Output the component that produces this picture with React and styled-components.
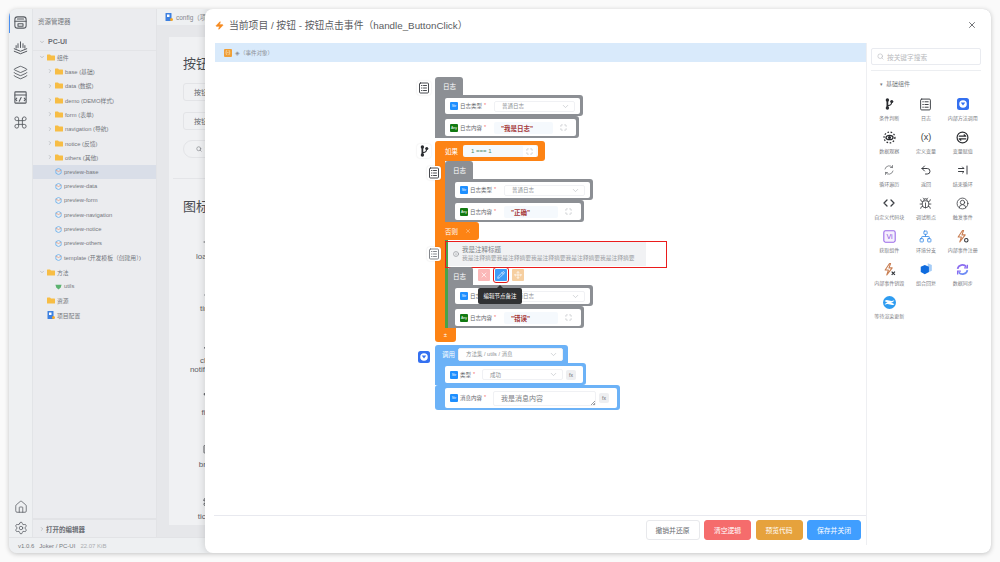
import React from "react";
import styled, { createGlobalStyle } from "styled-components";
import {
  Bell, BookOpen, Bug, ChevronDown, ChevronRight, CircleUserRound, Code, Command, Filter, Home,
  Info, Layers, Maximize, Network, Pencil, Search, Settings, Ticket, Timer, Undo2, X, Zap, Loader, Move,
} from "lucide-react";

const GlobalStyle = createGlobalStyle`
  html, body {
    margin: 0;
    height: 562px;
    overflow: hidden;
    background: #fafafa;
    font-family: "Liberation Sans", "Noto Sans CJK SC", sans-serif;
  }
  * { box-sizing: border-box; }
`;

const Page = styled.div`
  padding: 9px;
  width: 1000px;
  height: 562px;
`;

const Frame = styled.div`
  position: relative;
  width: 982px;
  height: 544px;
  display: flex;
  flex-direction: column;
  border-radius: 8px;
  overflow: hidden;
  background: #e8e9ec;
  box-shadow: 0 1px 5px rgba(0, 0, 0, 0.22);
`;

const Workspace = styled.div`
  flex: 1;
  min-height: 0;
  display: flex;
`;

const ActivityBar = styled.div`
  width: 24px;
  display: flex;
  flex-direction: column;
  align-items: center;
  padding: 1px 0 1px;
  background: #eef0f2;
  color: #55595f;
  border-right: 1px solid #e2e4e7;
`;

const ActivityItem = styled.div`
  position: relative;
  width: 100%;
  height: ${(p) => p.$h || 25}px;
  flex: none;
  display: flex;
  align-items: center;
  justify-content: center;
  ${(p) => p.$active && `
    &::before {
      content: "";
      position: absolute;
      left: 0;
      top: 3px;
      width: 1px;
      height: 20px;
      background: #4a8ff0;
    }
  `}
`;

const Spacer = styled.div`
  flex: 1;
`;

const Sidebar = styled.div`
  width: 124px;
  display: flex;
  flex-direction: column;
  background: #ebecef;
  border-right: 1px solid #e2e3e6;
`;

const SideTitle = styled.div`
  height: 24px;
  padding-left: 5px;
  display: flex;
  align-items: center;
  font-size: 6.5px;
  color: #777a80;
`;

const ProjectRow = styled.div`
  height: 18px;
  margin-bottom: -1px;
  padding-left: 6px;
  display: flex;
  align-items: center;
  gap: 3px;
  font-size: 7px;
  font-weight: bold;
  color: #6c6f75;
  border-bottom: 1px solid #e3e4e7;
`;

const TreeRow = styled.div`
  height: 14.33px;
  padding-left: ${(p) => 6 + p.$level * 8}px;
  display: flex;
  align-items: center;
  gap: 2px;
  font-size: 5.8px;
  white-space: nowrap;
  color: #74777d;
  background: ${(p) => (p.$selected ? "#d9dee8" : "transparent")};
`;

const Twist = styled.span`
  width: 6px;
  flex: none;
  display: flex;
  color: #999ca1;
`;

const OpenEditors = styled.div`
  height: 19px;
  padding-left: 6px;
  display: flex;
  align-items: center;
  gap: 1px;
  font-size: 6.5px;
  font-weight: bold;
  color: #6c6f75;
  border-top: 2px solid #e2e3e6;
`;

const Main = styled.div`
  flex: 1;
  min-width: 0;
  display: flex;
  flex-direction: column;
  background: #e6e7ea;
`;

const TabBar = styled.div`
  height: 16px;
  padding-left: 8px;
  flex: none;
  display: flex;
  align-items: center;
  gap: 3px;
  font-size: 6.5px;
  color: #85888e;
  background: #eef0f2;
`;

const Sheet = styled.div`
  margin: 12px 0 12px 12px;
  flex: 1;
  padding: 19px 0 0 14px;
  overflow: hidden;
  background: #f0f1f3;
`;

const SheetTitle = styled.div`
  height: 16px;
  font-size: 13px;
  line-height: 16px;
  color: #4b4d52;
`;

const GhostButton = styled.div`
  width: 60px;
  height: 18px;
  margin-top: ${(p) => p.$top}px;
  padding-left: ${(p) => (p.$pill ? 12 : 10)}px;
  display: flex;
  align-items: center;
  gap: 3px;
  font-size: 7px;
  color: #66696e;
  border: 1px solid #e3e4e7;
  border-radius: ${(p) => (p.$pill ? "9px" : "3px")};
`;

const SheetDivider = styled.div`
  height: 1px;
  margin: 20px 0 20px -10px;
  background: #e4e5e8;
`;

const SheetGap = styled.div`
  height: 21px;
`;

const IconItem = styled.div`
  width: 48px;
  height: 52px;
  margin-left: 2px;
  display: flex;
  flex-direction: column;
  align-items: center;
  font-size: 8px;
  line-height: 9px;
  text-align: center;
  color: #5e6166;
  svg { margin-bottom: 4px; flex: none; }
`;

const StatusBar = styled.div`
  height: 16px;
  flex: none;
  padding-left: 9px;
  display: flex;
  align-items: center;
  gap: 5px;
  font-size: 6px;
  color: #777a80;
  background: #eef0f2;
  border-top: 1px solid #e2e3e6;
  span:last-child { color: #aaacb0; }
`;

const Modal = styled.div`
  position: absolute;
  top: 0;
  left: 196px;
  right: 0;
  bottom: 0;
  display: flex;
  flex-direction: column;
  background: #fff;
  border-radius: 8px;
  box-shadow: 0 0 8px rgba(0, 0, 0, 0.16);
`;

const ModalHeader = styled.div`
  height: 34px;
  flex: none;
  padding: 0 14px 2px 10px;
  display: flex;
  align-items: center;
  gap: 5px;
  font-size: 9.8px;
  color: #5a5c61;
`;

const ModalTitle = styled.div`
  flex: 1;
  white-space: nowrap;
`;

const ModalBody = styled.div`
  flex: 1;
  min-height: 0;
  display: flex;
  margin-bottom: 8px;
`;

const EditorColumn = styled.div`
  width: 661px;
  padding-left: 10px;
  display: flex;
  flex-direction: column;
`;

const EventBar = styled.div`
  height: 19px;
  flex: none;
  padding-left: 9px;
  display: flex;
  align-items: center;
  gap: 3px;
  font-size: 5.5px;
  color: #8b8e94;
  background: #d9eafb;
`;

const EventChip = styled.span`
  width: 8px;
  height: 8px;
  display: flex;
  align-items: center;
  justify-content: center;
  font-size: 4.5px;
  color: #fff;
  background: #ef9f38;
  border-radius: 1px;
`;

const Canvas = styled.div`
  flex: 1;
  min-height: 0;
  padding: 15px 0 0 220px;
  display: flex;
  flex-direction: column;
  align-items: flex-start;
  gap: 3px;
`;

const Footer = styled.div`
  height: 30px;
  flex: none;
  margin-left: -1px;
  padding: 4px 5px 0 0;
  display: flex;
  justify-content: flex-end;
  gap: 4.5px;
  border-top: 1px solid #e8e9ef;
`;

const FootButton = styled.div`
  width: ${(p) => p.$w}px;
  height: 20px;
  display: flex;
  align-items: center;
  justify-content: center;
  font-size: 6.8px;
  border-radius: 3px;
  color: ${(p) => p.$fg || "#fff"};
  background: ${(p) => p.$bg};
  border: 1px solid ${(p) => p.$line || p.$bg};
`;

const Palette = styled.div`
  flex: 1;
  padding: 5px 10px 0 4px;
  border-left: 1px solid #eeeff2;
`;

const PaletteSearch = styled.div`
  height: 17px;
  padding-left: 5px;
  display: flex;
  align-items: center;
  gap: 3px;
  font-size: 6.7px;
  color: #b7b9bd;
  border: 1px solid #e9ebf0;
  border-radius: 2px;
`;

const PaletteRule = styled.div`
  height: 1px;
  margin-top: 5px;
  background: #eceef1;
`;

const PaletteGroup = styled.div`
  height: 24px;
  padding: 1px 0 0 9px;
  display: flex;
  align-items: center;
  gap: 3px;
  font-size: 6px;
  color: #777a80;
`;

const PaletteCaret = styled.span`
  font-size: 5px;
`;

const PaletteGrid = styled.div`
  display: grid;
  grid-template-columns: repeat(3, 1fr);
  grid-auto-rows: 33px;
`;

const PaletteItem = styled.div`
  display: flex;
  flex-direction: column;
  align-items: center;
  font-size: 5px;
  line-height: 10px;
  white-space: nowrap;
  color: #7d8085;
`;

const PaletteIcon = styled.div`
  height: 18px;
  display: flex;
  align-items: center;
  justify-content: center;
  color: #3c3f44;
  font-size: 9px;
`;

const Block = styled.div`
  position: relative;
  display: inline-flex;
  flex-direction: column;
  align-items: flex-start;
`;

const Gutter = styled.div`
  position: absolute;
  left: ${(p) => p.$left || -18}px;
  top: ${(p) => p.$top}px;
  width: 14px;
  height: 14px;
  display: flex;
  align-items: center;
  justify-content: center;
  background: ${(p) => (p.$plain ? "transparent" : "#fff")};
  border-radius: 3px;
  box-shadow: ${(p) => (p.$plain ? "none" : "0 0 2px rgba(0, 0, 0, 0.12)")};
  color: #34373c;
`;

const BlockHead = styled.div`
  position: relative;
  width: ${(p) => p.$w || 28}px;
  height: 18px;
  padding-left: ${(p) => p.$pad || 8}px;
  display: flex;
  align-items: center;
  font-size: 6.5px;
  color: #fff;
  background: #8c8f94;
  border-radius: 3px 3px 0 0;
`;

const StackRow = styled.div`
  padding: 3px 3px 2px ${(p) => p.$indent || 10}px;
  background: ${(p) => p.$color || "#8c8f94"};
  border-radius: ${(p) => (p.$last ? "3px" : "0 3px 3px 0")};
`;

const RowCard = styled.div`
  width: ${(p) => p.$w}px;
  height: ${(p) => p.$h}px;
  padding-left: 5px;
  display: flex;
  align-items: center;
  gap: 2px;
  background: #fff;
  border-radius: 2px;
`;

const TypeChip = styled.span`
  width: 8px;
  height: 8px;
  flex: none;
  display: flex;
  align-items: center;
  justify-content: center;
  font-size: 3.5px;
  color: #fff;
  background: ${(p) => (p.$any ? "#127a12" : "#1e8fff")};
  border-radius: 1px;
`;

const FieldLabel = styled.span`
  width: ${(p) => p.$w}px;
  flex: none;
  display: flex;
  gap: 2px;
  font-size: 5.5px;
  white-space: nowrap;
  color: #63666b;
  i { color: #f56c6c; font-style: normal; }
`;

const SelectBox = styled.div`
  width: ${(p) => p.$w}px;
  height: ${(p) => p.$h || 11}px;
  padding: 0 4px 0 7px;
  flex: none;
  display: flex;
  align-items: center;
  justify-content: space-between;
  font-size: 5.5px;
  color: #8c8f94;
  background: #fff;
  border: 1px solid #f0f1f4;
  border-radius: 2px;
  svg { color: #c6c8cc; }
`;

const TextField = styled.div`
  width: ${(p) => p.$w}px;
  height: 12px;
  padding-left: 7px;
  flex: none;
  display: flex;
  align-items: center;
  font-size: 6.5px;
  font-weight: bold;
  white-space: nowrap;
  color: ${(p) => p.$color || "#a5383a"};
  background: #f5f9fd;
  border-radius: 2px;
`;

const ExpandBox = styled.span`
  width: 13px;
  height: 11px;
  margin-left: ${(p) => p.$gap ?? 2}px;
  flex: none;
  display: flex;
  align-items: center;
  justify-content: center;
  color: #b2b5ba;
  background: #fff;
`;

const IfHead = styled.div`
  height: 20px;
  padding: 0 7px 0 10px;
  display: flex;
  align-items: center;
  gap: 5px;
  font-size: 6.5px;
  color: #fff;
  background: #fd8314;
  border-radius: 3px 3px 3px 0;
`;

const IfBody = styled.div`
  display: flex;
  flex-direction: column;
  align-items: flex-start;
  padding-left: 10px;
  background: linear-gradient(#fd8314, #fd8314) left / 10px 100% no-repeat;
`;

const ConditionField = styled.div`
  width: 75px;
  height: 12px;
  padding: 0 2px 0 8px;
  display: flex;
  align-items: center;
  justify-content: space-between;
  font-size: 6px;
  color: #4c8a6a;
  background: #f5f9fd;
  border-radius: 2px;
`;

const ElseHead = styled.div`
  width: 44px;
  height: 18px;
  margin-left: -10px;
  padding-left: 10px;
  display: flex;
  align-items: center;
  gap: 7px;
  font-size: 6.5px;
  color: #fff;
  background: #fd8314;
  border-radius: 0 3px 3px 0;
  svg { color: #fbd9b8; }
`;

const ElseBranch = styled.div`
  position: relative;
  padding-top: 2px;
  border-left: 3px solid #4aa248;
  display: flex;
  flex-direction: column;
  align-items: flex-start;
`;

const Comment = styled.div`
  position: relative;
  width: 198px;
  height: 24px;
  margin-bottom: 1px;
  padding-left: 5px;
  display: flex;
  align-items: center;
  gap: 3px;
  font-size: 5.75px;
  line-height: 9px;
  color: #9b9ea3;
  background: #f1f2f4;
  white-space: nowrap;
  strong { display: block; font-size: 6.5px; font-weight: normal; color: #7c7f84; }
  svg { color: #777a80; flex: none; }
`;

const Highlight = styled.div`
  position: absolute;
  left: -3px;
  top: -1px;
  width: 222px;
  height: 27px;
  border: 1.5px solid #ea1c1c;
  pointer-events: none;
`;

const Toolbar = styled.div`
  position: absolute;
  left: 30px;
  top: 2px;
  display: flex;
  gap: 5px;
`;

const ToolButton = styled.div`
  position: relative;
  width: 12px;
  height: 12px;
  display: flex;
  align-items: center;
  justify-content: center;
  color: #fff;
  background: ${(p) => p.$bg};
  border-radius: 1px;
  ${(p) => p.$marked && "outline: 1.5px solid #e01a1a; outline-offset: 1px;"}
`;

const Tooltip = styled.div`
  position: absolute;
  top: 19px;
  left: -17px;
  width: 44px;
  height: 16px;
  display: flex;
  align-items: center;
  justify-content: center;
  z-index: 2;
  font-size: 5.5px;
  white-space: nowrap;
  color: #fff;
  background: #303133;
  border-radius: 2px;
  &::before {
    content: "";
    position: absolute;
    top: -3px;
    left: 19px;
    border: 3px solid transparent;
    border-top: 0;
    border-bottom-color: #303133;
  }
`;

const IfFoot = styled.div`
  width: 21px;
  height: 14px;
  display: flex;
  align-items: center;
  justify-content: center;
  font-size: 6px;
  color: #fff;
  background: #fd8314;
  border-radius: 0 0 3px 3px;
`;

const CallHead = styled.div`
  width: 133px;
  height: 18px;
  padding-left: 7px;
  display: flex;
  align-items: center;
  gap: 2px;
  font-size: 6.5px;
  color: #fff;
  background: #6cb2f7;
  border-radius: 3px 3px 0 0;
`;

const CallLabel = styled.span`
  width: 14px;
  flex: none;
`;

const FxBox = styled.span`
  width: 10px;
  height: 10px;
  margin-left: 1px;
  flex: none;
  display: flex;
  align-items: center;
  justify-content: center;
  font-size: 5px;
  color: #66696e;
  background: #eeeff1;
  border-radius: 2px;
`;

const MessageBox = styled.div`
  position: relative;
  width: 103px;
  height: 15px;
  padding-left: 7px;
  flex: none;
  display: flex;
  align-items: center;
  font-size: 7px;
  color: #7a7d82;
  background: #fff;
  border: 1px solid #f0f1f4;
  border-radius: 2px;
  &::after {
    content: "";
    position: absolute;
    right: 0;
    bottom: 0;
    width: 4px;
    height: 4px;
    background: linear-gradient(135deg, transparent 45%, #9a9da2 45%, #9a9da2 60%, transparent 60%, transparent 75%, #9a9da2 75%);
  }
`;

const Svg = ({ s = 14, vb = 24, children, ...rest }) => (
  <svg width={s} height={s} viewBox={`0 0 ${vb} ${vb}`} fill="none" stroke="currentColor" strokeWidth="2" strokeLinecap="round" strokeLinejoin="round" {...rest}>
    {children}
  </svg>
);

const FolderIcon = () => (
  <svg width="8" height="7" viewBox="0 0 16 14" style={{ flex: "none" }}>
    <path d="M0 2a1 1 0 0 1 1-1h5l2 2h7a1 1 0 0 1 1 1v8a1 1 0 0 1-1 1H1a1 1 0 0 1-1-1z" fill="#f7bd45" />
  </svg>
);

const CubeIcon = ({ color = "#6fb3ee" }) => (
  <svg width="7" height="7" viewBox="0 0 16 16" style={{ flex: "none" }}>
    <path d="M8 1l6 3v8l-6 3-6-3V4z" fill="none" stroke={color} strokeWidth="2" />
    <path d="M2 5l6 3 6-3" fill="none" stroke="#e79a7a" strokeWidth="1.6" />
  </svg>
);

const GemIcon = () => (
  <svg width="7" height="7" viewBox="0 0 16 16" style={{ flex: "none" }}>
    <path d="M1 4h14l-2 6-5 5-5-5z" fill="#5cb270" />
  </svg>
);

const ConfigIcon = () => (
  <svg width="8" height="8" viewBox="0 0 16 16" style={{ flex: "none" }}>
    <rect x="1" width="12" height="16" rx="1" fill="#3d80e0" />
    <rect x="4" y="3" width="5" height="5" fill="#fff" />
    <circle cx="13" cy="13" r="3" fill="#f5a623" />
  </svg>
);

const ServerIcon = ({ s }) => (
  <Svg s={s} strokeWidth="1.7">
    <rect x="3" y="3" width="18" height="18" rx="4" />
    <path d="M3 10h18M7 6.500h10M8 14h8v4H8z" />
  </Svg>
);

const StackIcon = ({ s }) => (
  <Svg s={s} strokeWidth="1.6">
    <path d="M12 3v9M8 6v6M16 6v6M5 9v4M19 9v4" />
    <path d="M2 14l10 4 10-4M2 18l10 4 10-4" />
  </Svg>
);

const PanelCodeIcon = ({ s }) => (
  <Svg s={s} strokeWidth="1.7">
    <rect x="3" y="3" width="18" height="18" rx="1" />
    <path d="M3 8h18M6 13l-2 2 2 2M18 13l2 2-2 2M10 18l3-6" />
  </Svg>
);

const BranchIcon = ({ s = 12 }) => (
  <svg width={s} height={s} viewBox="0 0 24 24" fill="#2b2d31">
    <rect x="7" y="2" width="3.500" height="20" rx="1.500" />
    <circle cx="8.800" cy="4" r="3.400" />
    <circle cx="8.800" cy="20" r="3.400" />
    <circle cx="17.500" cy="7" r="3.200" />
    <path d="M10 14c5 0 6-2 6.200-6l2.200.2c-.2 5.400-2.400 8.200-8.400 8.200z" />
  </svg>
);

const LogIcon = ({ s = 12 }) => (
  <Svg s={s} strokeWidth="1.8">
    <rect x="3" y="2" width="18" height="20" rx="2" />
    <path d="M7 7h1M7 12h1M7 17h1M11 7h6M11 12h6M11 17h6" />
  </Svg>
);

const BadgeIcon = ({ s = 12 }) => (
  <svg width={s} height={s} viewBox="0 0 24 24">
    <rect width="24" height="24" rx="5" fill="#3470f0" />
    <circle cx="12" cy="12" r="7.500" fill="#fff" />
    <path d="M7.500 9h9L12 15z" fill="#3470f0" />
  </svg>
);

const DottedEyeIcon = () => (
  <svg width="13" height="13" viewBox="0 0 24 24" fill="none" stroke="#2b2d31" strokeWidth="2.400">
    <circle cx="12" cy="12" r="10" strokeDasharray="3 3" />
    <ellipse cx="12" cy="12" rx="6.500" ry="4" />
    <circle cx="12" cy="12" r="1.600" fill="#2b2d31" />
  </svg>
);

const AssignIcon = () => (
  <Svg s={13} strokeWidth="2.200" style={{ color: "#2b2d31" }}>
    <circle cx="12" cy="12" r="10" />
    <path d="M6 9.500h12l-3-2.500M18 14.500H6l3 2.500" />
  </Svg>
);

const LoopIcon = () => (
  <Svg s={12} strokeWidth="1.400" style={{ color: "#5b5e63" }}>
    <path d="M4 10a8.500 8.500 0 0 1 15-3M20 14a8.500 8.500 0 0 1-15 3" />
    <path d="M19 3v4h-4M5 21v-4h4" />
  </Svg>
);

const EndLoopIcon = () => (
  <Svg s={12} strokeWidth="2">
    <path d="M3 9h11l-3-3M3 15h11l-3 3M20 4v16" />
  </Svg>
);

const ViIcon = () => (
  <svg width="13" height="13" viewBox="0 0 24 24">
    <rect x="1.500" y="1.500" width="21" height="21" rx="3" fill="#f6f0fd" stroke="#9a6be8" strokeWidth="2" />
    <text x="12" y="17" fontSize="13" textAnchor="middle" fill="#8a54e0" fontFamily="Liberation Sans">Vi</text>
  </svg>
);

const ZapGearIcon = ({ cross }) => (
  <svg width="13" height="13" viewBox="0 0 24 24" fill="none">
    <path d="M12 1L4 13h6l-3 9 10-13h-6l3-8z" stroke="#c97e52" strokeWidth="2" strokeLinejoin="round" />
    {cross ? (
      <path d="M16 16l6 6M22 16l-6 6" stroke="#33363b" strokeWidth="2.200" />
    ) : (
      <circle cx="19" cy="19" r="3.200" stroke="#33363b" strokeWidth="2" />
    )}
  </svg>
);

const HexStackIcon = () => (
  <svg width="14" height="14" viewBox="0 0 24 24">
    <path d="M15 2l7 3v10l-7 3z" fill="#a6cdf7" />
    <path d="M10 5l7 3v9l-7 4-7-4V8z" fill="#0f6bde" />
  </svg>
);

const SyncIcon = () => (
  <svg width="13" height="13" viewBox="0 0 24 24" fill="none" stroke="#8a6cf0" strokeWidth="3.200">
    <path d="M3 11a9 9 0 0 1 16-4" />
    <path d="M21 13a9 9 0 0 1-16 4" stroke="#6f8cf5" />
    <path d="M21 3v6h-6M3 21v-6h6" strokeWidth="2.400" />
  </svg>
);

const SwirlIcon = () => (
  <svg width="13" height="13" viewBox="0 0 24 24">
    <circle cx="12" cy="12" r="12" fill="#2f9cf0" />
    <path d="M3 9c6-5 9 3 18-1-3 5-7 5-10 4S6 11 3 9zM21 15c-6 5-9-3-18 1 3-5 7-5 10-4s5 1 8 3z" fill="#fff" />
  </svg>
);

const treeItems = [
  { label: "组件", level: 0, open: true },
  { label: "base (基础)", level: 1 },
  { label: "data (数据)", level: 1 },
  { label: "demo (DEMO样式)", level: 1 },
  { label: "form (表单)", level: 1 },
  { label: "navigation (导航)", level: 1 },
  { label: "notice (反馈)", level: 1 },
  { label: "others (其他)", level: 1 },
  { label: "preview-base", level: 1, file: "cube", selected: true },
  { label: "preview-data", level: 1, file: "cube" },
  { label: "preview-form", level: 1, file: "cube" },
  { label: "preview-navigation", level: 1, file: "cube" },
  { label: "preview-notice", level: 1, file: "cube" },
  { label: "preview-others", level: 1, file: "cube" },
  { label: "template (开发模板（创建用）)", level: 1, file: "cube" },
  { label: "方法", level: 0, open: true },
  { label: "utils", level: 1, file: "gem" },
  { label: "资源", level: 0, file: "folder" },
  { label: "项目配置", level: 0, file: "config" },
];

const paletteItems = [
  ["条件判断", <BranchIcon key="i" />],
  ["日志", <LogIcon key="i" s={13} />],
  ["内部方法调用", <BadgeIcon key="i" />],
  ["数据观察", <DottedEyeIcon key="i" />],
  ["定义变量", "(x)"],
  ["变量赋值", <AssignIcon key="i" />],
  ["循环遍历", <LoopIcon key="i" />],
  ["返回", <Undo2 key="i" size={12} />],
  ["结束循环", <EndLoopIcon key="i" />],
  ["自定义代码块", <Code key="i" size={12} strokeWidth={2.6} />],
  ["调试断点", <Bug key="i" size={13} strokeWidth={1.5} />],
  ["触发事件", <CircleUserRound key="i" size={13} strokeWidth={1.5} />],
  ["获取组件", <ViIcon key="i" />],
  ["环境分支", <Network key="i" size={13} color="#3f8fe8" strokeWidth={1.6} />],
  ["内部事件注册", <ZapGearIcon key="i" />],
  ["内部事件销毁", <ZapGearIcon key="i" cross />],
  ["组合回复", <HexStackIcon key="i" />],
  ["数据同步", <SyncIcon key="i" />],
  ["等待渲染更新", <SwirlIcon key="i" />],
];

const sheetIcons = [
  ["loading", <Loader key="i" size={12} />],
  ["timer", <Timer key="i" size={12} />],
  ["clock notification", <Bell key="i" size={12} />],
  ["filter", <Filter key="i" size={12} fill="#44474c" />],
  ["bread", <BookOpen key="i" size={12} />],
  ["tickets", <Ticket key="i" size={12} />],
];

function TreeIcon({ file }) {
  if (file === "cube") return <CubeIcon />;
  if (file === "gem") return <GemIcon />;
  if (file === "config") return <ConfigIcon />;
  return <FolderIcon />;
}

function TypeRow({ w, indent, value }) {
  return (
    <StackRow $indent={indent}>
      <RowCard $w={w} $h={16}>
        <TypeChip>Str</TypeChip>
        <FieldLabel $w={32}>日志类型<i>*</i></FieldLabel>
        <SelectBox $w={81}>
          {value}
          <ChevronDown size={9} />
        </SelectBox>
      </RowCard>
    </StackRow>
  );
}

function ContentRow({ w, indent, fieldW, value }) {
  return (
    <StackRow $indent={indent}>
      <RowCard $w={w} $h={17}>
        <TypeChip $any>Any</TypeChip>
        <FieldLabel $w={32}>日志内容<i>*</i></FieldLabel>
        <TextField $w={fieldW}>{value}</TextField>
        <ExpandBox><Maximize size={7} /></ExpandBox>
      </RowCard>
    </StackRow>
  );
}

function LogBlock({ gutterTop, rowW, contentW, fieldW, value }) {
  return (
    <Block>
      <Gutter $top={gutterTop}><LogIcon /></Gutter>
      <BlockHead>日志</BlockHead>
      <TypeRow w={rowW} value="普通日志" />
      <ContentRow w={contentW} fieldW={fieldW} value={value} />
    </Block>
  );
}

function EditorLeft() {
  return (
    <ActivityBar>
      <ActivityItem $active><ServerIcon s={15} /></ActivityItem>
      <ActivityItem><StackIcon s={15} /></ActivityItem>
      <ActivityItem><Layers size={15} strokeWidth={1.4} /></ActivityItem>
      <ActivityItem><PanelCodeIcon s={15} /></ActivityItem>
      <ActivityItem><Command size={15} strokeWidth={1.4} /></ActivityItem>
      <Spacer />
      <ActivityItem><Home size={14} strokeWidth={1.3} /></ActivityItem>
      <ActivityItem $h={17}><Settings size={14} strokeWidth={1.3} /></ActivityItem>
    </ActivityBar>
  );
}

function Explorer() {
  return (
    <Sidebar>
      <SideTitle>资源管理器</SideTitle>
      <ProjectRow><ChevronDown size={6} color="#999ca1" />PC-UI</ProjectRow>
      {treeItems.map((item) => (
        <TreeRow key={item.label} $level={item.level} $selected={item.selected}>
          <Twist>
            {!item.file && (item.open ? <ChevronDown size={6} /> : <ChevronRight size={6} />)}
          </Twist>
          <TreeIcon file={item.file} />
          {item.label}
        </TreeRow>
      ))}
      <Spacer />
      <OpenEditors><ChevronRight size={6} color="#999ca1" />打开的编辑器</OpenEditors>
    </Sidebar>
  );
}

function Preview() {
  return (
    <Main>
      <TabBar><ConfigIcon />config（项目配置）</TabBar>
      <Sheet>
        <SheetTitle>按钮</SheetTitle>
        <GhostButton $top={11}>按钮</GhostButton>
        <GhostButton $top={11}>按钮</GhostButton>
        <GhostButton $top={10} $pill><Search size={6} />搜索</GhostButton>
        <SheetDivider />
        <SheetTitle>图标</SheetTitle>
        <SheetGap />
        {sheetIcons.map(([label, icon]) => (
          <IconItem key={label}>{icon}{label}</IconItem>
        ))}
      </Sheet>
    </Main>
  );
}

function Flow() {
  return (
    <Canvas>
      <LogBlock gutterTop={4} rowW={135} contentW={131} fieldW={59} value="&quot;我是日志&quot;" />

      <Block>
        <Gutter $top={3}><BranchIcon /></Gutter>
        <IfHead>
          如果
          <ConditionField>
            1 === 1
            <ExpandBox $gap={0}><Maximize size={7} /></ExpandBox>
          </ConditionField>
        </IfHead>
        <IfBody>
          <LogBlock gutterTop={5} rowW={135} contentW={126} fieldW={54} value="&quot;正确&quot;" />
          <ElseHead>否则<X size={6} /></ElseHead>
          <ElseBranch>
            <Comment>
              <Gutter $top={5} $left={-21}><LogIcon /></Gutter>
              <Info size={6} />
              <div>
                <strong>我是注释标题</strong>
                我是注释摘要我是注释摘要我是注释摘要我是注释摘要我是注释摘要
              </div>
              <Highlight />
            </Comment>
            <Block>
              <BlockHead $w={25} $pad={5}>
                日志
                <Toolbar>
                  <ToolButton $bg="#fbb8b8"><X size={8} /></ToolButton>
                  <ToolButton $bg="#3f9bf7" $marked>
                    <Pencil size={8} />
                    <Tooltip>编辑节点备注</Tooltip>
                  </ToolButton>
                  <ToolButton $bg="#f6cfa0"><Move size={8} /></ToolButton>
                </Toolbar>
              </BlockHead>
              <TypeRow w={135} indent={7} value="普通日志" />
              <ContentRow w={126} indent={7} fieldW={54} value="&quot;错误&quot;" />
            </Block>
          </ElseBranch>
        </IfBody>
        <IfFoot>±</IfFoot>
      </Block>

      <Block>
        <Gutter $top={5} $plain><BadgeIcon /></Gutter>
        <CallHead>
          <CallLabel>调用</CallLabel>
          <SelectBox $w={105} $h={13}>方法集 / utils / 消息<ChevronDown size={9} /></SelectBox>
        </CallHead>
        <StackRow $color="#6cb2f7">
          <RowCard $w={138} $h={17}>
            <TypeChip>Str</TypeChip>
            <FieldLabel $w={20}>类型<i>*</i></FieldLabel>
            <SelectBox $w={81}>成功<ChevronDown size={9} /></SelectBox>
            <FxBox>fx</FxBox>
          </RowCard>
        </StackRow>
        <StackRow $color="#6cb2f7" $last>
          <RowCard $w={172} $h={20}>
            <TypeChip>Str</TypeChip>
            <FieldLabel $w={31}>消息内容<i>*</i></FieldLabel>
            <MessageBox>我是消息内容</MessageBox>
            <FxBox>fx</FxBox>
          </RowCard>
        </StackRow>
      </Block>
    </Canvas>
  );
}

export default function App() {
  return (
    <Page>
      <GlobalStyle />
      <Frame>
        <Workspace>
          <EditorLeft />
          <Explorer />
          <Preview />
        </Workspace>
        <StatusBar>
          <span>v1.0.6</span>
          <span>Joker / PC-UI</span>
          <span>22.07 KiB</span>
        </StatusBar>
        <Modal>
          <ModalHeader>
            <Zap size={9} fill="#f58a1f" color="#f58a1f" />
            <ModalTitle>当前项目 / 按钮 - 按钮点击事件（handle_ButtonClick）</ModalTitle>
            <X size={10} color="#55585d" />
          </ModalHeader>
          <ModalBody>
            <EditorColumn>
              <EventBar><EventChip>(-)</EventChip>◈（事件对象）</EventBar>
              <Flow />
              <Footer>
                <FootButton $w={54} $bg="#fff" $fg="#6a6d72" $line="#e8e9ec">撤销并还原</FootButton>
                <FootButton $w={47} $bg="#f56c6c">清空逻辑</FootButton>
                <FootButton $w={47} $bg="#e6a23c">预览代码</FootButton>
                <FootButton $w={54} $bg="#409eff">保存并关闭</FootButton>
              </Footer>
            </EditorColumn>
            <Palette>
              <PaletteSearch><Search size={7} />按关键字搜索</PaletteSearch>
              <PaletteRule />
              <PaletteGroup><PaletteCaret>▾</PaletteCaret>基础组件</PaletteGroup>
              <PaletteGrid>
                {paletteItems.map(([label, icon]) => (
                  <PaletteItem key={label}>
                    <PaletteIcon>{icon}</PaletteIcon>
                    {label}
                  </PaletteItem>
                ))}
              </PaletteGrid>
            </Palette>
          </ModalBody>
        </Modal>
      </Frame>
    </Page>
  );
}
